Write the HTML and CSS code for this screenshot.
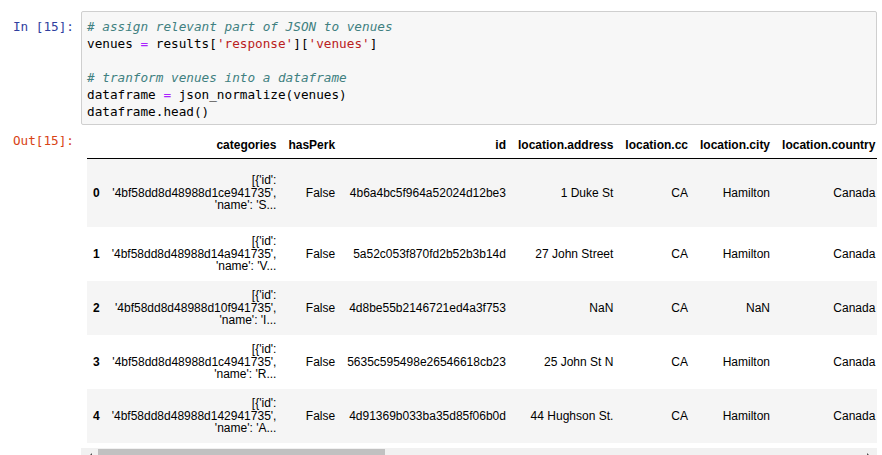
FILE: index.html
```html
<!DOCTYPE html>
<html>
<head>
<meta charset="utf-8">
<title>Notebook</title>
<link rel="stylesheet" href="styles.css">
</head>
<body>
<div class="notebook">
  <div class="cell-row input-row">
    <div class="prompt prompt-in">In&nbsp;[15]:</div>
    <div class="input-area">
      <div class="code">
        <div class="line"><span class="c"># assign relevant part of JSON to venues</span></div>
        <div class="line"><span>venues </span><span class="o">=</span><span> results[</span><span class="s">'response'</span><span>][</span><span class="s">'venues'</span><span>]</span></div>
        <div class="line"></div>
        <div class="line"><span class="c"># tranform venues into a dataframe</span></div>
        <div class="line"><span>dataframe </span><span class="o">=</span><span> json_normalize(venues)</span></div>
        <div class="line"><span>dataframe.head()</span></div>
      </div>
    </div>
  </div>
  <div class="cell-row output-row">
    <div class="prompt prompt-out">Out[15]:</div>
    <div class="output-area">
      <div class="scroll-content">
        <table class="df">
          <thead>
            <tr>
              <th></th>
              <th>categories</th>
              <th>hasPerk</th>
              <th>id</th>
              <th>location.address</th>
              <th>location.cc</th>
              <th>location.city</th>
              <th>location.country</th>
            </tr>
          </thead>
          <tbody>
            <tr class="tall">
              <th>0</th>
              <td>[{'id':<br>'4bf58dd8d48988d1ce941735',<br>'name': 'S...</td>
              <td>False</td>
              <td>4b6a4bc5f964a52024d12be3</td>
              <td>1 Duke St</td>
              <td>CA</td>
              <td>Hamilton</td>
              <td>Canada</td>
            </tr>
            <tr>
              <th>1</th>
              <td>[{'id':<br>'4bf58dd8d48988d14a941735',<br>'name': 'V...</td>
              <td>False</td>
              <td>5a52c053f870fd2b52b3b14d</td>
              <td>27 John Street</td>
              <td>CA</td>
              <td>Hamilton</td>
              <td>Canada</td>
            </tr>
            <tr>
              <th>2</th>
              <td>[{'id':<br>'4bf58dd8d48988d10f941735',<br>'name': 'I...</td>
              <td>False</td>
              <td>4d8be55b2146721ed4a3f753</td>
              <td>NaN</td>
              <td>CA</td>
              <td>NaN</td>
              <td>Canada</td>
            </tr>
            <tr>
              <th>3</th>
              <td>[{'id':<br>'4bf58dd8d48988d1c4941735',<br>'name': 'R...</td>
              <td>False</td>
              <td>5635c595498e26546618cb23</td>
              <td>25 John St N</td>
              <td>CA</td>
              <td>Hamilton</td>
              <td>Canada</td>
            </tr>
            <tr>
              <th>4</th>
              <td>[{'id':<br>'4bf58dd8d48988d142941735',<br>'name': 'A...</td>
              <td>False</td>
              <td>4d91369b033ba35d85f06b0d</td>
              <td>44 Hughson St.</td>
              <td>CA</td>
              <td>Hamilton</td>
              <td>Canada</td>
            </tr>
          </tbody>
        </table>
      </div>
      <div class="hscroll">
        <div class="sb-btn sb-left"><span class="arrow-left"></span></div>
        <div class="sb-track"><div class="sb-thumb"></div></div>
        <div class="sb-btn sb-right"><span class="arrow-right"></span></div>
      </div>
    </div>
  </div>
</div>
</body>
</html>
```

FILE: styles.css
```css
html, body {
  margin: 0;
  padding: 0;
  background: #ffffff;
}

.notebook {
  padding: 11px 5px 0 0;
}

.cell-row {
  display: flex;
  align-items: flex-start;
}

.prompt {
  width: 81px;
  flex: none;
  box-sizing: border-box;
  padding-right: 7px;
  text-align: right;
  font-family: "DejaVu Sans Mono", "Liberation Mono", monospace;
  font-size: 12.7px;
  line-height: 17px;
  white-space: nowrap;
}

.prompt-in {
  color: #303f9f;
  padding-top: 7px;
}

.prompt-out {
  color: #d84315;
  padding-top: 6px;
}

.input-area {
  flex: 1;
  min-width: 0;
  border: 1px solid #cfcfcf;
  border-radius: 2px;
  background: #f7f7f7;
  padding: 6px 5px 4px;
}

.code {
  font-family: "DejaVu Sans Mono", "Liberation Mono", monospace;
  font-size: 12.7px;
  line-height: 17px;
  color: #000000;
}

.code .line {
  height: 17px;
  white-space: pre;
}

.code .c {
  color: #408080;
  font-style: italic;
}

.code .s {
  color: #ba2121;
}

.code .o {
  color: #aa22ff;
}

.output-row {
  margin-top: 1px;
}

.output-area {
  flex: 1;
  min-width: 0;
  overflow: hidden;
}

.scroll-content {
  overflow: hidden;
  padding: 6px 0 5px 6px;
}

.df {
  border-collapse: separate;
  border-spacing: 0;
  font-family: "Liberation Sans", Arial, sans-serif;
  font-size: 12px;
  line-height: 12.5px;
  color: #000000;
  white-space: nowrap;
}

.df th,
.df td {
  text-align: right;
  vertical-align: middle;
  padding: 0 6px;
  font-weight: normal;
}

.df thead th {
  font-weight: bold;
  line-height: 13px;
  padding: 7px 6px 6px;
  border-bottom: 1px solid #000000;
}

.df tbody tr {
  height: 54px;
}

.df tbody tr.tall {
  height: 68px;
}

.df tbody th {
  font-weight: bold;
}

.df tbody tr:nth-child(odd) {
  background: #f5f5f5;
}

.hscroll {
  display: flex;
  height: 17px;
  background: #f1f1f1;
}

.sb-btn {
  width: 17px;
  flex: none;
  display: flex;
  align-items: center;
  justify-content: center;
}

.arrow-left {
  width: 0;
  height: 0;
  border-top: 4px solid transparent;
  border-bottom: 4px solid transparent;
  border-right: 4px solid #505050;
}

.arrow-right {
  width: 0;
  height: 0;
  border-top: 4px solid transparent;
  border-bottom: 4px solid transparent;
  border-left: 4px solid #505050;
}

.sb-track {
  flex: 1;
  padding-top: 1px;
}

.sb-thumb {
  width: 287px;
  height: 15px;
  background: #c1c1c1;
}
```
